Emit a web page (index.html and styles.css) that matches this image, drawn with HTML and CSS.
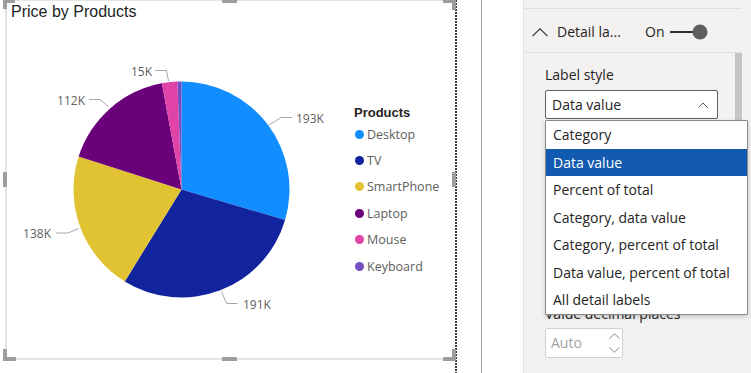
FILE: index.html
```html
<!DOCTYPE html>
<html>
<head>
<meta charset="utf-8">
<link rel="stylesheet" href="styles.css">
</head>
<body>
<div class="page">
  <div class="canvas">
    <div class="visual">
      <div class="title">Price by Products</div>
      <div class="chart-row">
        <svg class="pie" width="340" height="300" viewBox="7 24 340 300">
          <path fill="#118DFF" d="M181.5 189.5 L181.5 81.5 A108 108 0 0 1 285.10 219.99 Z"/>
          <path fill="#12239E" d="M181.5 189.5 L285.10 219.99 A108 108 0 0 1 124.75 281.39 Z"/>
          <path fill="#E1C233" d="M181.5 189.5 L124.75 281.39 A108 108 0 0 1 78.66 156.52 Z"/>
          <path fill="#6B007B" d="M181.5 189.5 L78.66 156.52 A108 108 0 0 1 161.88 83.29 Z"/>
          <path fill="#E044A7" d="M181.5 189.5 L161.88 83.29 A108 108 0 0 1 177.34 81.58 Z"/>
          <path fill="#744EC2" d="M181.5 189.5 L177.34 81.58 A108 108 0 0 1 181.5 81.5 Z"/>
          <g class="leader">
            <polyline points="269,125 281,117.5 292,117.5"/>
            <polyline points="221.5,291.5 226.5,303.5 237.5,303.5"/>
            <polyline points="78.5,228.5 68,233 56,233"/>
            <polyline points="108.5,106.5 100,99.5 89,99.5"/>
            <polyline points="168.5,81 166.5,70.5 155,70.5"/>
          </g>
          <g class="dlabel">
            <text x="296" y="118">193K</text>
            <text x="243" y="304">191K</text>
            <text x="51" y="233" text-anchor="end">138K</text>
            <text x="85" y="100" text-anchor="end">112K</text>
            <text x="152" y="71" text-anchor="end">15K</text>
          </g>
        </svg>
        <div class="legend">
          <div class="legend-title">Products</div>
          <div class="legend-item"><span class="dot c-desktop"></span>Desktop</div>
          <div class="legend-item"><span class="dot c-tv"></span>TV</div>
          <div class="legend-item"><span class="dot c-phone"></span>SmartPhone</div>
          <div class="legend-item"><span class="dot c-laptop"></span>Laptop</div>
          <div class="legend-item"><span class="dot c-mouse"></span>Mouse</div>
          <div class="legend-item"><span class="dot c-keyboard"></span>Keyboard</div>
        </div>
      </div>
    </div>
    <span class="h h-tl-v"></span><span class="h h-tl-h"></span>
    <span class="h h-tm"></span>
    <span class="h h-tr-v"></span><span class="h h-tr-h"></span>
    <span class="h h-lm"></span>
    <span class="h h-rm"></span>
    <span class="h h-bl-v"></span><span class="h h-bl-h"></span>
    <span class="h h-bm"></span>
    <span class="h h-br-v"></span><span class="h h-br-h"></span>
  </div>
  <div class="dotted"></div>
  <div class="gap1"></div>
  <div class="vline"></div>
  <div class="gap2"></div>
  <div class="pane">
    <div class="pane-top"></div>
    <div class="pane-header">
      <svg class="hdr-chev" width="16" height="9" viewBox="0 0 16 9"><path d="M0.5 8.2 L8 0.8 L15.5 8.2" fill="none" stroke="#323130" stroke-width="1.1"/></svg>
      <span class="hdr-title">Detail la...</span>
      <span class="hdr-on">On</span>
      <svg class="toggle" width="38" height="16" viewBox="0 0 38 16"><line x1="0" y1="8" x2="26" y2="8" stroke="#323130" stroke-width="2"/><circle cx="30" cy="8" r="7.5" fill="#605e5c"/></svg>
    </div>
    <div class="pane-body">
      <div class="field-label">Label style</div>
      <div class="select-wrap">
        <div class="select">
          <span>Data value</span>
          <svg width="10" height="6" viewBox="0 0 10 6"><path d="M0.5 5.5 L5 1 L9.5 5.5" fill="none" stroke="#605e5c" stroke-width="1"/></svg>
        </div>
        <div class="menu">
          <div class="menu-item">Category</div>
          <div class="menu-item selected">Data value</div>
          <div class="menu-item">Percent of total</div>
          <div class="menu-item">Category, data value</div>
          <div class="menu-item">Category, percent of total</div>
          <div class="menu-item">Data value, percent of total</div>
          <div class="menu-item">All detail labels</div>
        </div>
      </div>
      <div class="field-label label2">Value decimal places</div>
      <div class="spin">
        <span class="spin-text">Auto</span>
        <span class="spin-btns">
          <svg width="11" height="6" viewBox="0 0 11 6"><path d="M0.5 5.5 L5.5 0.8 L10.5 5.5" fill="none" stroke="#8a8886" stroke-width="1"/></svg>
          <svg width="11" height="6" viewBox="0 0 11 6"><path d="M0.5 0.5 L5.5 5.2 L10.5 0.5" fill="none" stroke="#8a8886" stroke-width="1"/></svg>
        </span>
      </div>
    </div>
    <div class="scrollbar"></div>
  </div>
</div>
</body>
</html>
```
FILE: styles.css
```css
* { box-sizing: border-box; }
html, body { margin: 0; padding: 0; background: #ffffff; }
body { width: 751px; height: 373px; overflow: hidden; font-family: "Open Sans", "Noto Sans", sans-serif; }

.page { display: flex; height: 373px; }

.canvas { position: relative; width: 455px; height: 373px; flex: none; }
.visual {
  margin-left: 5px;
  width: 450px;
  height: 360px;
  border-left: 2px solid #e3e3e3;
  border-top: 1px solid #e3e3e3;
  border-bottom: 2px solid #e3e3e3;
}
.title {
  font-family: "Liberation Sans", Arial, sans-serif;
  font-size: 16px;
  line-height: 20px;
  color: #201f1e;
  padding: 1px 0 2px 4px;
  height: 23px;
}
.chart-row { display: flex; align-items: flex-start; }
.pie { display: block; flex: none; }
.leader polyline { fill: none; stroke: #a8a8a8; stroke-width: 1; }
.dlabel text { font-family: "Open Sans", sans-serif; font-size: 12px; fill: #605e5c; dominant-baseline: central; }

.legend { margin-left: 7px; margin-top: 81px; color: #605e5c; }
.legend-title { font-family: "Liberation Sans", Arial, sans-serif; font-weight: bold; font-size: 13px; line-height: 16px; color: #252423; }
.legend-item { display: flex; align-items: center; height: 26.4px; font-size: 12.5px; }
.dot { width: 9px; height: 9px; border-radius: 50%; margin-left: 1px; margin-right: 3px; flex: none; }
.c-desktop { background: #118DFF; }
.c-tv { background: #12239E; }
.c-phone { background: #E1C233; }
.c-laptop { background: #6B007B; }
.c-mouse { background: #E044A7; }
.c-keyboard { background: #744EC2; }

.h { position: absolute; background: #9e9e9e; }
.h-tl-v { left: 3px; top: 0; width: 4px; height: 9px; }
.h-tl-h { left: 3px; top: 0; width: 12px; height: 3px; }
.h-tm { left: 222px; top: 0; width: 15px; height: 3px; }
.h-tr-v { left: 452px; top: 0; width: 4px; height: 10px; }
.h-tr-h { left: 443px; top: 0; width: 13px; height: 3px; }
.h-lm { left: 3px; top: 172px; width: 4px; height: 15px; }
.h-rm { left: 452px; top: 172px; width: 4px; height: 15px; }
.h-bl-v { left: 3px; top: 349px; width: 4px; height: 12px; }
.h-bl-h { left: 3px; top: 357px; width: 13px; height: 4px; }
.h-bm { left: 222px; top: 357px; width: 15px; height: 4px; }
.h-br-v { left: 452px; top: 349px; width: 4px; height: 12px; }
.h-br-h { left: 443px; top: 357px; width: 13px; height: 4px; }

.dotted {
  width: 2px; height: 373px; flex: none;
  background: repeating-linear-gradient(to bottom, #3b3b3b 0px, #3b3b3b 2px, #ffffff 2px, #ffffff 3px);
}
.gap1 { width: 24px; flex: none; }
.vline { width: 1px; flex: none; background: #a19f9d; }
.gap2 { width: 41px; flex: none; }

.pane {
  position: relative;
  width: 228px;
  flex: none;
  background: #f3f2f1;
  border-left: 1px solid #e1dfdd;
  color: #252423;
  font-size: 14px;
}
.pane-top { height: 9px; border-bottom: 1px solid #e1dfdd; margin-right: 10px; }
.pane-header {
  height: 44px;
  border-bottom: 1px solid #e1dfdd;
  margin-right: 10px;
  display: flex;
  align-items: center;
  padding: 3px 0 0 8px;
}
.hdr-chev { display: block; flex: none; }
.hdr-title { width: 88px; margin-left: 9px; line-height: 20px; }
.hdr-on { width: 25px; line-height: 20px; }
.toggle { display: block; flex: none; }

.pane-body { padding-left: 21px; }
.field-label { line-height: 20px; margin-top: 12px; }
.select-wrap { position: relative; margin-top: 5px; width: 173px; }
.select {
  height: 29px;
  border: 1px solid #605e5c;
  border-radius: 2px;
  background: #ffffff;
  display: flex;
  align-items: center;
  justify-content: space-between;
  padding: 0 9px 0 6px;
}
.select svg { display: block; }
.menu {
  position: absolute;
  left: 0;
  top: 30px;
  width: 203px;
  background: #ffffff;
  border: 1px solid #8a8886;
  border-radius: 1px;
  box-shadow: 0 2px 5px rgba(0,0,0,0.18);
  z-index: 2;
}
.menu-item { height: 27.5px; line-height: 28.5px; padding-left: 7px; white-space: nowrap; }
.menu-item.selected { background: #115ab0; color: #ffffff; }

.label2 { margin-top: 185px; }
.spin {
  margin-top: 4px;
  width: 78px;
  height: 30px;
  border: 1px solid #d2d0ce;
  border-radius: 2px;
  background: #ffffff;
  display: flex;
  align-items: center;
  justify-content: space-between;
  padding: 0 2px 0 5px;
}
.spin-text { color: #a19f9d; line-height: 20px; }
.spin-btns { display: flex; flex-direction: column; gap: 8px; }
.spin-btns svg { display: block; }

.scrollbar { position: absolute; left: 211px; top: 53px; width: 7px; height: 160px; background: #c8c6c4; }
```
